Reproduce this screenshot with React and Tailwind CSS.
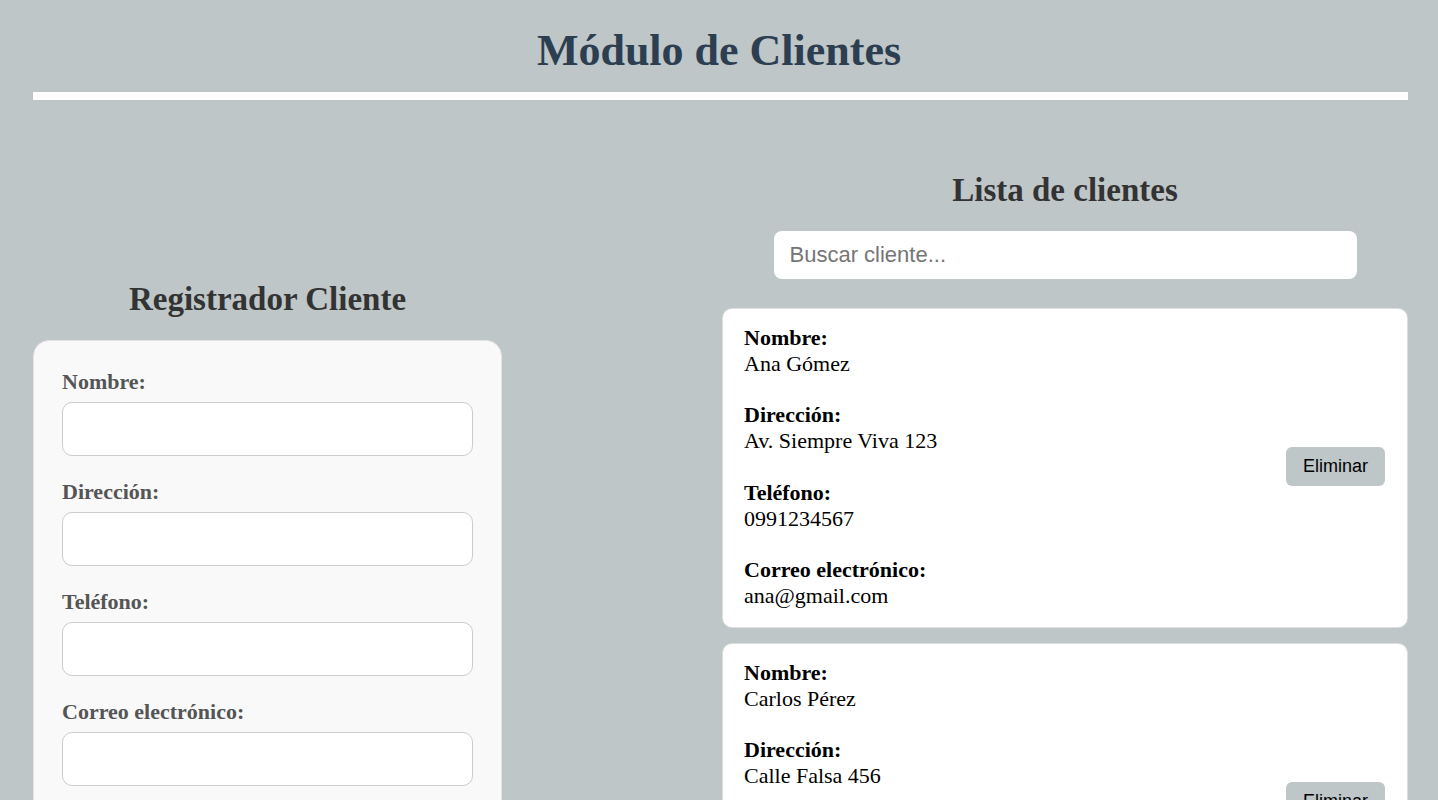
import { useState } from 'react';

const clientes = [
    { id: 1, nombre: 'Ana Gómez', direccion: 'Av. Siempre Viva 123', telefono: '0991234567', correo: 'ana@gmail.com' },
    { id: 2, nombre: 'Carlos Pérez', direccion: 'Calle Falsa 456', telefono: '0987654321', correo: 'carlos@gmail.com' },
];

const inputClass = 'w-full h-[54px] rounded-[10px] border border-[#cccccc] bg-white px-3 text-[20px] outline-none';
const labelClass = 'block text-[22px] leading-[25px] font-bold text-[#555555] mb-2';

function Campo({ label, value, onChange, type = 'text' }) {
    return (
        <div className="mb-[23px]">
            <label className={labelClass}>{label}</label>
            <input type={type} value={value} onChange={onChange} className={inputClass} />
        </div>
    );
}

function ClienteCard({ c }) {
    return (
        <div className="flex items-center justify-between rounded-[10px] border border-[#dddddd] bg-white pl-[21px] pr-[22px] pt-[16px] pb-[18px] text-[22px] leading-[25.8px] text-black">
            <div>
                <strong>Nombre:</strong>
                <div>{c.nombre}</div>
                <div className="h-[25.8px]" />
                <strong>Dirección:</strong>
                <div>{c.direccion}</div>
                <div className="h-[25.8px]" />
                <strong>Teléfono:</strong>
                <div>{c.telefono}</div>
                <div className="h-[25.8px]" />
                <strong>Correo electrónico:</strong>
                <div>{c.correo}</div>
            </div>
            <button className="h-[39px] rounded-[6px] bg-[#bec6c8] px-[17px] font-['Liberation_Sans',Arial,sans-serif] text-[18px] text-black">
                Eliminar
            </button>
        </div>
    );
}

export default function App() {
    const [form, setForm] = useState({ nombre: '', direccion: '', telefono: '', correo: '' });
    const [busqueda, setBusqueda] = useState('');

    const set = (k) => (e) => setForm({ ...form, [k]: e.target.value });

    const filtrados = clientes.filter((c) => c.nombre.toLowerCase().includes(busqueda.toLowerCase()));

    return (
        <div className="min-h-screen bg-[#bec6c8] px-[33px] font-['Liberation_Serif','Times_New_Roman',serif]">
            <header>
                <h1 className="pt-[25px] pb-[16px] text-center text-[44px] leading-[51px] font-bold text-[#2c3e50]">
                    Módulo de Clientes
                </h1>
                <div className="h-[8px] w-[1375px] bg-white" />
            </header>

            <div className="flex w-[1375px] justify-between">
                <section className="w-[469px] pt-[180px]">
                    <h2 className="mb-[22px] text-center text-[33px] leading-[38px] font-bold text-[#333333]">Registrador Cliente</h2>
                    <form className="rounded-[16px] border border-[#e3e3e3] bg-[#f9f9f9] px-[28px] pt-[28px] pb-[28px]">
                        <Campo label="Nombre:" value={form.nombre} onChange={set('nombre')} />
                        <Campo label="Dirección:" value={form.direccion} onChange={set('direccion')} />
                        <Campo label="Teléfono:" value={form.telefono} onChange={set('telefono')} />
                        <Campo label="Correo electrónico:" value={form.correo} onChange={set('correo')} type="email" />
                    </form>
                </section>

                <section className="w-[686px] pt-[71px]">
                    <h2 className="text-center text-[33px] leading-[38px] font-bold text-[#333333]">Lista de clientes</h2>
                    <div className="mt-[22px] mb-[29px] flex justify-center">
                        <input
                            type="text"
                            value={busqueda}
                            onChange={(e) => setBusqueda(e.target.value)}
                            placeholder="Buscar cliente..."
                            className="h-[48px] w-[583px] rounded-[8px] bg-white px-[16px] font-['Liberation_Sans',Arial,sans-serif] text-[22px] outline-none placeholder:text-[#757575]"
                        />
                    </div>
                    <div className="flex flex-col gap-[15px]">
                        {filtrados.map((c) => (
                            <ClienteCard key={c.id} c={c} />
                        ))}
                    </div>
                </section>
            </div>
        </div>
    );
}
